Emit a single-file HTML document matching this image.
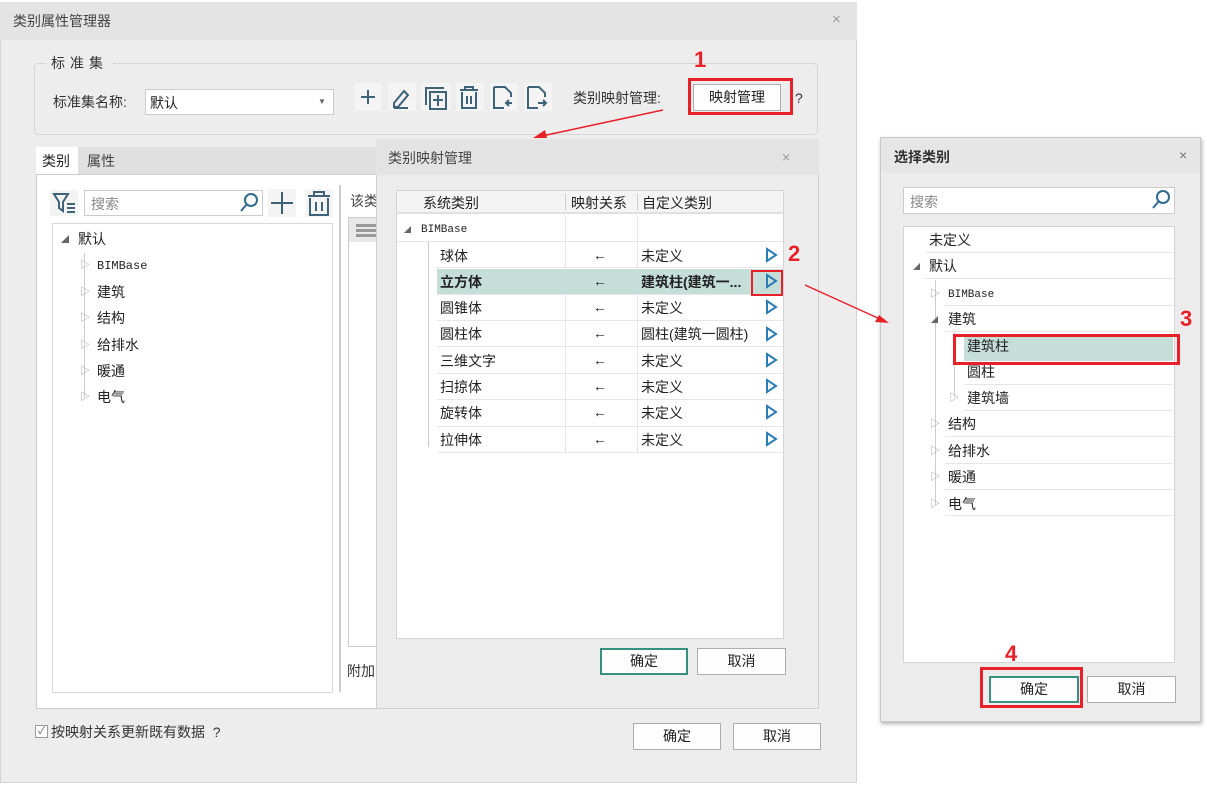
<!DOCTYPE html>
<html><head><meta charset="utf-8">
<style>
*{margin:0;padding:0;box-sizing:border-box}
body{width:1207px;height:788px;background:#fff;position:relative;overflow:hidden;font-family:"Liberation Sans","Noto Sans CJK SC",sans-serif;font-size:14px;color:#222}
.a{position:absolute}
.t{position:absolute;white-space:nowrap;line-height:16px}
.btn{position:absolute;background:#fdfdfd;border:1px solid #adadad;text-align:center;font-size:14px}
.red{position:absolute;border:3px solid #e8202a}
.num{position:absolute;color:#e8202a;font-weight:bold;font-size:22px;line-height:22px;text-shadow:0 0 2px #fff}
.row{position:absolute;border-bottom:1px solid #e6e6e6;height:26px}
.tri{position:absolute}
.mono{font-family:"Liberation Mono",monospace;font-size:12px}
</style></head><body>

<div class="a" style="left:0;top:2px;width:857px;height:781px;background:#ededed;border:1px solid #d4d4d4"></div>
<div class="a" style="left:0;top:2px;width:857px;height:38px;background:#e4e4e4"></div>
<div class="t" style="left:13px;top:13px;color:#444">类别属性管理器</div>
<div class="t" style="left:832px;top:12px;color:#999;font-size:15px">×</div>

<div class="a" style="left:34px;top:63px;width:784px;height:72px;border:1px solid #d6d6d6;border-radius:4px"></div>
<div class="t" style="left:46px;top:55px;background:#ededed;padding:0 5px;letter-spacing:5px;color:#333">标准集</div>
<div class="t" style="left:53px;top:94px;color:#333">标准集名称:</div>
<div class="a" style="left:145px;top:89px;width:189px;height:26px;background:#fff;border:1px solid #ccc"></div>
<div class="t" style="left:150px;top:95px">默认</div>
<div class="t" style="left:318px;top:94px;font-size:8px;color:#666">▼</div>

<svg class="a" style="left:354px;top:83px" width="205" height="32" viewBox="0 0 205 32" fill="none" stroke="#3e6379" stroke-width="2">
<rect x="0" y="0" width="28" height="28" fill="#f4f4f4" stroke="none"/><path d="M14 7v14M7 14h14"/>
<rect x="34" y="0" width="28" height="28" fill="#f4f4f4" stroke="none"/><path d="M40 20l10-12 4 4-10 12h-4z M40 25h14"/>
<rect x="68" y="0" width="28" height="28" fill="#f4f4f4" stroke="none"/><path d="M72 22V5h18 M76 9h16v17H76z M84 12v11 M79 17h10"/>
<rect x="102" y="0" width="28" height="28" fill="#f4f4f4" stroke="none"/><path d="M106 7h18 M111 7V4h8v3 M108 9v16h14V9 M113 13v8 M117 13v8"/>
<rect x="136" y="0" width="28" height="28" fill="#f4f4f4" stroke="none"/><path d="M152 20h6 M155 17l-3 3 3 3 M140 4h11l6 6v4 M140 4v21h10"/>
<rect x="170" y="0" width="28" height="28" fill="#f4f4f4" stroke="none"/><path d="M184 20h8 M189 17l3 3-3 3 M174 4h11l6 6v4 M174 4v21h10"/>
</svg>
<div class="t" style="left:573px;top:90px;color:#333">类别映射管理:</div>
<div class="btn" style="left:693px;top:84px;width:88px;height:27px;line-height:25px">映射管理</div>
<div class="red" style="left:688px;top:78px;width:105px;height:37px"></div>
<div class="t" style="left:795px;top:90px;color:#333">?</div>
<div class="num" style="left:694px;top:49px">1</div>

<div class="a" style="left:36px;top:147px;width:783px;height:27px;background:#e0e0e0"></div>
<div class="a" style="left:36px;top:147px;width:42px;height:28px;background:#fff"></div>
<div class="t" style="left:42px;top:153px">类别</div>
<div class="t" style="left:87px;top:153px;color:#444">属性</div>
<div class="a" style="left:36px;top:174px;width:783px;height:535px;background:#fff;border:1px solid #ccc"></div>
<svg class="a" style="left:50px;top:190px" width="30" height="26"><rect width="28" height="26" fill="#f4f4f4"/><path d="M4 4h14l-5 8v9l-4-3v-6z" fill="none" stroke="#3e6379" stroke-width="2"/><path d="M17 14h8M17 18h8M17 22h8" stroke="#3e6379" stroke-width="2"/></svg>
<div class="a" style="left:84px;top:190px;width:179px;height:26px;border:1px solid #ccc;background:#fff"></div>
<div class="t" style="left:91px;top:196px;color:#888">搜索</div>
<svg class="a" style="left:238px;top:192px" width="22" height="22" fill="none" stroke="#2f6b8f" stroke-width="2"><circle cx="13" cy="8" r="6"/><path d="M9 12l-6 7"/></svg>
<svg class="a" style="left:268px;top:189px" width="70" height="28" fill="none" stroke="#3e6379" stroke-width="2"><rect x="0" y="0" width="28" height="28" fill="#f4f4f4" stroke="none"/><path d="M14 3v22M3 14h22"/><rect x="37" y="0" width="28" height="28" fill="#f4f4f4" stroke="none"/><path d="M40 7h22 M46 7V3h10v4 M42 9v17h18V9 M48 13v9 M54 13v9"/></svg>
<div class="a" style="left:52px;top:223px;width:281px;height:470px;border:1px solid #d8d8d8"></div>
<div class="t" style="left:61px;top:232px;font-size:8px;color:#666">◢</div>
<div class="t" style="left:78px;top:231px">默认</div>
<div class="a" style="left:84px;top:253px;width:1px;height:145px;background:#ccc"></div>
<div class="t" style="left:80px;top:258px;font-size:10px;color:#999">▷</div><div class="t mono" style="left:97px;top:258px">BIMBase</div>
<div class="t" style="left:80px;top:285px;font-size:10px;color:#999">▷</div><div class="t" style="left:97px;top:284px">建筑</div>
<div class="t" style="left:80px;top:311px;font-size:10px;color:#999">▷</div><div class="t" style="left:97px;top:310px">结构</div>
<div class="t" style="left:80px;top:338px;font-size:10px;color:#999">▷</div><div class="t" style="left:97px;top:337px">给排水</div>
<div class="t" style="left:80px;top:364px;font-size:10px;color:#999">▷</div><div class="t" style="left:97px;top:363px">暖通</div>
<div class="t" style="left:80px;top:390px;font-size:10px;color:#999">▷</div><div class="t" style="left:97px;top:389px">电气</div>
<div class="a" style="left:339px;top:185px;width:2px;height:507px;background:#ccc"></div>
<div class="t" style="left:350px;top:193px;color:#444">该类</div>
<div class="a" style="left:348px;top:217px;width:40px;height:430px;border:1px solid #ccc"></div>
<div class="a" style="left:349px;top:218px;width:30px;height:24px;background:#e8e8e8"></div>
<div class="a" style="left:356px;top:224px;width:20px;height:3px;background:#999;box-shadow:0 5px 0 #999,0 10px 0 #999"></div>
<div class="t" style="left:347px;top:663px;color:#333">附加</div>

<div class="a" style="left:35px;top:725px;width:13px;height:13px;border:1px solid #999;background:#fff;font-size:10px;line-height:11px;text-align:center;color:#555">✓</div>
<div class="t" style="left:51px;top:724px;color:#333">按映射关系更新既有数据 &nbsp;?</div>
<div class="btn" style="left:633px;top:723px;width:88px;height:27px;line-height:25px">确定</div>
<div class="btn" style="left:733px;top:723px;width:88px;height:27px;line-height:25px">取消</div>

<div class="a" style="left:376px;top:139px;width:443px;height:570px;background:#ececec;border:1px solid #cfcfcf"></div>
<div class="a" style="left:376px;top:139px;width:443px;height:36px;background:#e3e3e3"></div>
<div class="t" style="left:388px;top:150px;color:#444">类别映射管理</div>
<div class="t" style="left:782px;top:149px;color:#999">×</div>
<div class="a" style="left:396px;top:190px;width:388px;height:449px;background:#fff;border:1px solid #d4d4d4"></div>
<div class="a" style="left:397px;top:191px;width:386px;height:23px;background:#f4f4f4;border-bottom:2px solid #e0e0e0"></div>
<div class="t" style="left:423px;top:195px">系统类别</div>
<div class="a" style="left:565px;top:194px;width:1px;height:16px;background:#ccc"></div>
<div class="t" style="left:571px;top:195px">映射关系</div>
<div class="a" style="left:637px;top:194px;width:1px;height:16px;background:#ccc"></div>
<div class="t" style="left:642px;top:195px">自定义类别</div>
<div class="a" style="left:565px;top:216px;width:1px;height:238px;background:#e6e6e6"></div>
<div class="a" style="left:637px;top:216px;width:1px;height:238px;background:#e6e6e6"></div>
<div class="row" style="left:397px;top:216px;width:386px"></div>
<div class="t" style="left:404px;top:223px;font-size:7px;color:#666">◢</div>
<div class="t mono" style="left:421px;top:222px;font-size:11px">BIMBase</div>
<div class="a" style="left:428px;top:242px;width:1px;height:205px;background:#ccc"></div>

<div class="a" style="left:437px;top:269px;width:346px;height:26px;background:#c5dfd8"></div>
<div class="row" style="left:437px;top:242px;width:346px"></div><div class="t" style="left:440px;top:248px">球体</div><div class="t" style="left:593px;top:247px">←</div><div class="t" style="left:641px;top:248px">未定义</div>
<div class="row" style="left:437px;top:269px;width:346px"></div><div class="t" style="left:440px;top:274px;font-weight:bold">立方体</div><div class="t" style="left:593px;top:273px">←</div><div class="t" style="left:641px;top:274px;font-weight:bold">建筑柱(建筑一...</div>
<div class="row" style="left:437px;top:295px;width:346px"></div><div class="t" style="left:440px;top:300px">圆锥体</div><div class="t" style="left:593px;top:299px">←</div><div class="t" style="left:641px;top:300px">未定义</div>
<div class="row" style="left:437px;top:321px;width:346px"></div><div class="t" style="left:440px;top:326px">圆柱体</div><div class="t" style="left:593px;top:325px">←</div><div class="t" style="left:641px;top:326px">圆柱(建筑一圆柱)</div>
<div class="row" style="left:437px;top:348px;width:346px"></div><div class="t" style="left:440px;top:353px">三维文字</div><div class="t" style="left:593px;top:352px">←</div><div class="t" style="left:641px;top:353px">未定义</div>
<div class="row" style="left:437px;top:374px;width:346px"></div><div class="t" style="left:440px;top:379px">扫掠体</div><div class="t" style="left:593px;top:378px">←</div><div class="t" style="left:641px;top:379px">未定义</div>
<div class="row" style="left:437px;top:401px;width:346px"></div><div class="t" style="left:440px;top:405px">旋转体</div><div class="t" style="left:593px;top:404px">←</div><div class="t" style="left:641px;top:405px">未定义</div>
<div class="row" style="left:437px;top:427px;width:346px"></div><div class="t" style="left:440px;top:432px">拉伸体</div><div class="t" style="left:593px;top:431px">←</div><div class="t" style="left:641px;top:432px">未定义</div>
<svg class="a" style="left:764px;top:242px" width="16" height="212" fill="none" stroke="#2d7db5" stroke-width="2">
<path d="M3 7l9 6-9 6z"/><path d="M3 33l9 6-9 6z"/><path d="M3 59l9 6-9 6z"/><path d="M3 86l9 6-9 6z"/><path d="M3 112l9 6-9 6z"/><path d="M3 138l9 6-9 6z"/><path d="M3 164l9 6-9 6z"/><path d="M3 191l9 6-9 6z"/>
</svg>
<div class="red" style="left:751px;top:270px;width:32px;height:26px;border-width:2px"></div>
<div class="num" style="left:788px;top:243px">2</div>
<div class="btn" style="left:600px;top:648px;width:88px;height:27px;line-height:23px;border:2px solid #3a9080">确定</div>
<div class="btn" style="left:697px;top:648px;width:89px;height:27px;line-height:25px">取消</div>

<div class="a" style="left:880px;top:137px;width:321px;height:585px;background:#ececec;border:1px solid #c8c8c8;box-shadow:1px 2px 4px rgba(0,0,0,.3)"></div>
<div class="a" style="left:881px;top:138px;width:319px;height:35px;background:#e6e6e6"></div>
<div class="t" style="left:894px;top:149px;color:#333;font-weight:bold">选择类别</div>
<div class="t" style="left:1179px;top:147px;color:#777">×</div>
<div class="a" style="left:903px;top:187px;width:272px;height:27px;background:#fff;border:1px solid #ccc"></div>
<div class="t" style="left:910px;top:194px;color:#888">搜索</div>
<svg class="a" style="left:1150px;top:189px" width="22" height="22" fill="none" stroke="#2f6b8f" stroke-width="2"><circle cx="13" cy="8" r="6"/><path d="M9 12l-6 7"/></svg>
<div class="a" style="left:903px;top:226px;width:272px;height:437px;background:#fff;border:1px solid #d4d4d4"></div>
<div class="row" style="left:925px;top:227px;width:248px"></div><div class="t" style="left:929px;top:232px">未定义</div>
<div class="row" style="left:925px;top:253px;width:248px"></div><div class="t" style="left:913px;top:260px;font-size:7px;color:#666">◢</div><div class="t" style="left:929px;top:258px">默认</div>
<div class="a" style="left:935px;top:280px;width:1px;height:225px;background:#ccc"></div>
<div class="row" style="left:945px;top:280px;width:228px"></div><div class="t" style="left:930px;top:287px;font-size:10px;color:#999">▷</div><div class="t mono" style="left:948px;top:287px;font-size:11px">BIMBase</div>
<div class="row" style="left:945px;top:306px;width:228px"></div><div class="t" style="left:931px;top:313px;font-size:7px;color:#666">◢</div><div class="t" style="left:948px;top:311px">建筑</div>
<div class="a" style="left:954px;top:332px;width:1px;height:65px;background:#ccc"></div>
<div class="a" style="left:964px;top:337px;width:209px;height:24px;background:#c5dfd8"></div>
<div class="t" style="left:967px;top:338px">建筑柱</div>
<div class="row" style="left:964px;top:359px;width:209px"></div><div class="t" style="left:967px;top:364px">圆柱</div>
<div class="row" style="left:964px;top:385px;width:209px"></div><div class="t" style="left:949px;top:391px;font-size:10px;color:#999">▷</div><div class="t" style="left:967px;top:390px">建筑墙</div>
<div class="row" style="left:945px;top:411px;width:228px"></div><div class="t" style="left:930px;top:417px;font-size:10px;color:#999">▷</div><div class="t" style="left:948px;top:416px">结构</div>
<div class="row" style="left:945px;top:438px;width:228px"></div><div class="t" style="left:930px;top:444px;font-size:10px;color:#999">▷</div><div class="t" style="left:948px;top:443px">给排水</div>
<div class="row" style="left:945px;top:464px;width:228px"></div><div class="t" style="left:930px;top:470px;font-size:10px;color:#999">▷</div><div class="t" style="left:948px;top:469px">暖通</div>
<div class="row" style="left:945px;top:490px;width:228px"></div><div class="t" style="left:930px;top:497px;font-size:10px;color:#999">▷</div><div class="t" style="left:948px;top:496px">电气</div>
<div class="red" style="left:953px;top:334px;width:227px;height:31px"></div>
<div class="num" style="left:1180px;top:308px">3</div>
<div class="btn" style="left:989px;top:676px;width:90px;height:27px;line-height:23px;border:2px solid #3a9080">确定</div>
<div class="btn" style="left:1087px;top:676px;width:89px;height:27px;line-height:25px">取消</div>
<div class="red" style="left:980px;top:667px;width:103px;height:41px"></div>
<div class="num" style="left:1005px;top:643px">4</div>

<svg class="a" style="left:0;top:0" width="1207" height="788">
<g stroke="#e8202a" stroke-width="1.5" fill="#e8202a">
<line x1="663" y1="110" x2="542" y2="136"/><path d="M533 138l12-8 2 8z" stroke="none"/>
<line x1="805" y1="285" x2="880" y2="319"/><path d="M889 323l-14-1 4-7z" stroke="none"/>
</g></svg>
</body></html>
